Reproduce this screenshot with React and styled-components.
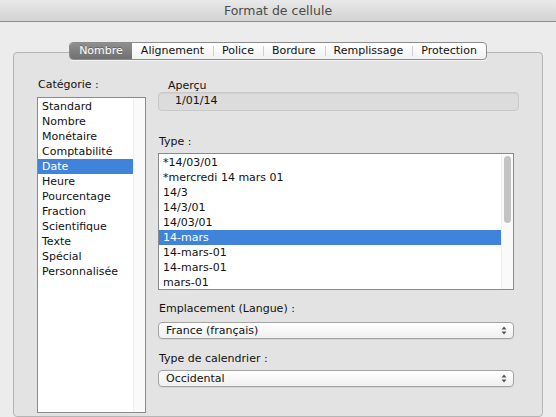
import styled, { createGlobalStyle } from 'styled-components';

const GlobalStyle = createGlobalStyle`
  html, body {
    margin: 0;
    padding: 0;
    background: #ececec;
  }
  body {
    font-family: "DejaVu Sans", "Noto Sans", sans-serif;
    font-size: 11px;
    color: #111;
  }
`;

const tabs = ['Nombre', 'Alignement', 'Police', 'Bordure', 'Remplissage', 'Protection'];

const categories = [
  'Standard', 'Nombre', 'Monétaire', 'Comptabilité', 'Date', 'Heure',
  'Pourcentage', 'Fraction', 'Scientifique', 'Texte', 'Spécial', 'Personnalisée'
];

const types = [
  '*14/03/01', '*mercredi 14 mars 01', '14/3', '14/3/01', '14/03/01',
  '14-mars', '14-mars-01', '14-mars-01', 'mars-01'
];

const Window = styled.div`
  width: 556px;
  height: 417px;
  overflow: hidden;
  background: #ececec;
  display: flex;
  flex-direction: column;
`;

const TitleBar = styled.div`
  flex: 0 0 21px;
  display: flex;
  align-items: center;
  justify-content: center;
  background: linear-gradient(#e9e9e9, #d3d3d3);
  border-bottom: 1px solid #8e8e8e;
  font-size: 12.5px;
  color: #4a4a4a;
`;

const Panel = styled.div`
  margin: 30px 13px 0;
  flex: 1;
  border: 1px solid #b5b5b5;
  border-radius: 4px;
  background: #e3e3e3;
  display: flex;
  flex-direction: column;
`;

const TabBar = styled.div`
  align-self: center;
  margin-top: -11px;
  height: 16px;
  display: flex;
  border: 1px solid #8c8c8c;
  border-radius: 4px;
  background: linear-gradient(#ffffff, #f1f1f1);
  overflow: hidden;
  box-shadow: 0 1px 0 rgba(255, 255, 255, 0.6);
`;

const Tab = styled.div`
  display: flex;
  align-items: center;
  padding: 0 9px;
  line-height: 16px;
  color: ${(p) => (p.$active ? '#fff' : '#111')};
  background: ${(p) => (p.$active ? 'linear-gradient(#8f8f8f, #707070)' : 'transparent')};
  text-shadow: ${(p) => (p.$active ? '0 -1px 0 rgba(0,0,0,0.3)' : 'none')};
  position: relative;

  & + &::before {
    content: '';
    position: absolute;
    left: 0;
    top: 3px;
    bottom: 3px;
    width: 1px;
    background: #cfcfcf;
  }
`;

const Body = styled.div`
  display: flex;
  gap: 12px;
  padding-left: 23px;
`;

const LeftColumn = styled.div`
  width: 109px;
  display: flex;
  flex-direction: column;
  padding-top: 19px;
`;

const RightColumn = styled.div`
  width: 361px;
  display: flex;
  flex-direction: column;
  padding-top: 20px;
`;

const Label = styled.div`
  line-height: 12px;
  margin-top: ${(p) => p.$top || 0}px;
  padding-left: ${(p) => p.$indent || 1}px;
  color: #111;
`;

const ListBox = styled.div`
  margin-top: ${(p) => p.$top || 0}px;
  width: ${(p) => p.$width}px;
  height: ${(p) => p.$height}px;
  box-sizing: border-box;
  border: 1px solid #8a8a8a;
  background: #fff;
  display: flex;
`;

const Rows = styled.div`
  flex: 1;
  padding-top: 1px;
  overflow: hidden;
`;

const Row = styled.div`
  height: 15px;
  line-height: 15px;
  padding-left: 4px;
  white-space: nowrap;
  background: ${(p) => (p.$selected ? '#3f84da' : 'transparent')};
  color: ${(p) => (p.$selected ? '#fff' : '#111')};
`;

const Track = styled.div`
  width: 11px;
  background: #fafafa;
  border-left: 1px solid #efefef;
  position: relative;
`;

const Thumb = styled.div`
  position: absolute;
  left: 2px;
  top: 2px;
  width: 7px;
  height: 67px;
  border-radius: 4px;
  background: #c3c3c3;
`;

const Preview = styled.div`
  height: 19px;
  box-sizing: border-box;
  border: 1px solid #c9c9c9;
  border-radius: 4px;
  background: #dcdcdc;
  padding-left: 16px;
  line-height: 15px;
  box-shadow: inset 0 1px 1px rgba(0, 0, 0, 0.05);
`;

const Select = styled.div`
  margin-top: ${(p) => p.$top || 0}px;
  width: 356px;
  height: 17px;
  box-sizing: border-box;
  border: 1px solid #a3a3a3;
  border-radius: 4px;
  background: linear-gradient(#ffffff, #f0f0f0);
  box-shadow: 0 1px 0 rgba(0, 0, 0, 0.06);
  display: flex;
  align-items: center;
  justify-content: space-between;
  padding: 0 6px 0 7px;
`;

const Arrows = () => (
  <svg width="6" height="9" viewBox="0 0 6 9">
    <path d="M3 0.5 L5.5 3.5 H0.5 Z" fill="#555" />
    <path d="M3 8.5 L5.5 5.5 H0.5 Z" fill="#555" />
  </svg>
);

export default function App() {
  return (
    <Window>
      <GlobalStyle />
      <TitleBar>Format de cellule</TitleBar>
      <Panel>
        <TabBar>
          {tabs.map((t) => (
            <Tab key={t} $active={t === 'Nombre'}>{t}</Tab>
          ))}
        </TabBar>
        <Body>
          <LeftColumn>
            <Label>Catégorie :</Label>
            <ListBox $top={6} $width={109} $height={316}>
              <Rows>
                {categories.map((c) => (
                  <Row key={c} $selected={c === 'Date'}>{c}</Row>
                ))}
              </Rows>
              <Track />
            </ListBox>
          </LeftColumn>
          <RightColumn>
            <Label $indent={10}>Aperçu</Label>
            <Preview>1/01/14</Preview>
            <Label $top={25}>Type :</Label>
            <ListBox $top={5} $width={356} $height={137}>
              <Rows>
                {types.map((t, i) => (
                  <Row key={i} $selected={t === '14-mars'}>{t}</Row>
                ))}
              </Rows>
              <Track>
                <Thumb />
              </Track>
            </ListBox>
            <Label $top={13}>Emplacement (Langue) :</Label>
            <Select $top={7}>
              <span>France (français)</span>
              <Arrows />
            </Select>
            <Label $top={14}>Type de calendrier :</Label>
            <Select $top={5}>
              <span>Occidental</span>
              <Arrows />
            </Select>
          </RightColumn>
        </Body>
      </Panel>
    </Window>
  );
}
